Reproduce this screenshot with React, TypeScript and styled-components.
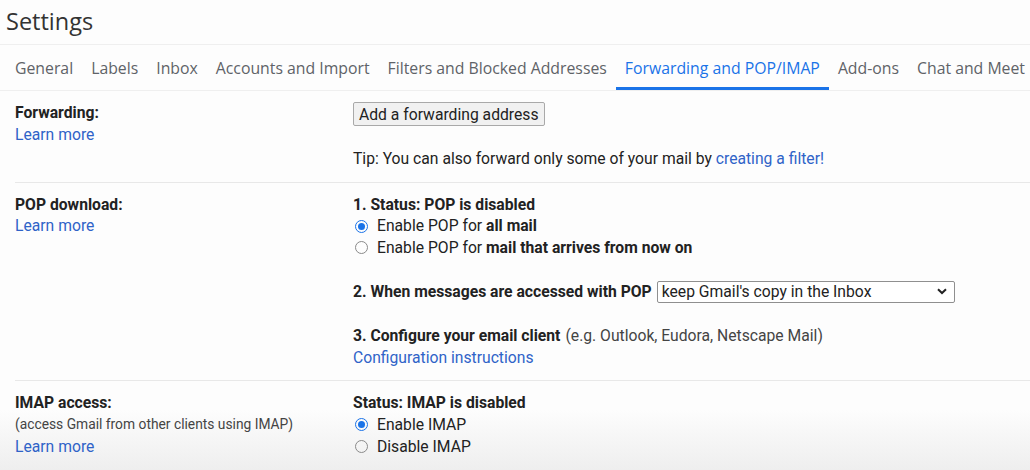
import React, { FC, ReactNode } from 'react';
import styled, { createGlobalStyle } from 'styled-components';

const GlobalStyle = createGlobalStyle`
  html, body {
    margin: 0;
    padding: 0;
    background: #fdfdfd;
  }
  body {
    font-family: Roboto, "Liberation Sans", sans-serif;
    color: #222;
  }
`;

const Page = styled.div`
  box-sizing: border-box;
  height: 470px;
  overflow: hidden;
  background: linear-gradient(
    to bottom,
    #fdfdfd 0,
    #fdfdfd 410px,
    #eeeeee 470px
  );
`;

const Title = styled.h1`
  border-bottom: 1px solid #efefef;
  box-sizing: border-box;
  color: #333;
  font-family: "Open Sans", Roboto, sans-serif;
  font-size: 23.5px;
  font-weight: 400;
  height: 45px;
  line-height: 42px;
  margin: 0;
  padding-left: 6px;
`;

const Tabs = styled.nav`
  border-bottom: 1px solid #efefef;
  box-sizing: border-box;
  display: flex;
  height: 46px;
  padding-left: 6px;
`;

const Tab = styled.a<{ $active?: boolean }>`
  align-items: center;
  border-bottom: 3px solid ${(p) => (p.$active ? '#1a73e8' : 'transparent')};
  box-sizing: border-box;
  color: ${(p) => (p.$active ? '#1a73e8' : '#5f6368')};
  display: flex;
  font-family: "Open Sans", Roboto, sans-serif;
  font-size: 15.8px;
  font-weight: 500;
  height: 45px;
  padding: 3px 9px 0;
  white-space: nowrap;
`;

const Section = styled.section<{ $last?: boolean }>`
  border-bottom: ${(p) => (p.$last ? 'none' : '1px solid #e8e8e8')};
  display: grid;
  grid-template-columns: 338px 1fr;
  margin-left: 15px;
  padding: 11px 0 12px;
`;

const LabelCol = styled.div`
  display: flex;
  flex-direction: column;
`;

const Label = styled.div`
  color: #222;
  font-size: 15.7px;
  font-weight: 700;
  line-height: 21.7px;
`;

const Note = styled.div`
  color: #444;
  font-size: 13.8px;
  line-height: 21.7px;
`;

const Link = styled.a`
  color: #2f63c8;
  font-size: 15.7px;
  line-height: 21.7px;
  text-decoration: none;
`;

const Content = styled.div`
  display: flex;
  flex-direction: column;
  font-size: 15.7px;
  line-height: 21.7px;
`;

const Line = styled.div<{ $gap?: number }>`
  align-items: center;
  display: flex;
  margin-top: ${(p) => p.$gap ?? 0}px;
  white-space: nowrap;
`;

const Strong = styled.b`
  font-weight: 700;
`;

const Muted = styled.span`
  color: #444;
  margin-left: 5px;
`;

const Button = styled.button`
  align-self: flex-start;
  background: #f1f1f1;
  border: 1px solid #a9a9a9;
  border-radius: 2px;
  color: #222;
  font-family: Roboto, "Liberation Sans", sans-serif;
  font-size: 15.7px;
  height: 24px;
  padding: 0 5px;
`;

const Radio = styled.span<{ $checked?: boolean }>`
  border: 1px solid ${(p) => (p.$checked ? '#1a73e8' : '#8a8a8a')};
  border-radius: 50%;
  box-sizing: border-box;
  display: inline-block;
  height: 13px;
  margin: 0 9px 0 2px;
  position: relative;
  width: 13px;

  &::after {
    background: #1a73e8;
    border-radius: 50%;
    content: '';
    display: ${(p) => (p.$checked ? 'block' : 'none')};
    height: 7px;
    left: 2px;
    position: absolute;
    top: 2px;
    width: 7px;
  }
`;

const Select = styled.div`
  align-items: center;
  background: #fff;
  border: 1px solid #8f8f8f;
  border-radius: 2px;
  box-sizing: border-box;
  display: flex;
  height: 22px;
  justify-content: space-between;
  margin-left: 5px;
  padding: 0 7px 0 4px;
  width: 298px;
`;

const Chevron: FC = () => (
  <svg width="10" height="7" viewBox="0 0 10 7">
    <path d="M1 1.2 L5 5 L9 1.2" fill="none" stroke="#222" strokeWidth="2" />
  </svg>
);

const Option: FC<{ checked?: boolean; children: ReactNode }> = ({ checked, children }) => (
  <Line>
    <Radio $checked={checked} />
    <span>{children}</span>
  </Line>
);

const tabs = [
  'General',
  'Labels',
  'Inbox',
  'Accounts and Import',
  'Filters and Blocked Addresses',
  'Forwarding and POP/IMAP',
  'Add-ons',
  'Chat and Meet',
];

const App: FC = () => (
  <Page>
    <GlobalStyle />
    <Title>Settings</Title>
    <Tabs>
      {tabs.map((t) => (
        <Tab key={t} $active={t === 'Forwarding and POP/IMAP'}>
          {t}
        </Tab>
      ))}
    </Tabs>

    <Section>
      <LabelCol>
        <Label>Forwarding:</Label>
        <Link>Learn more</Link>
      </LabelCol>
      <Content>
        <Button>Add a forwarding address</Button>
        <Line $gap={22}>
          Tip: You can also forward only some of your mail by&nbsp;
          <Link>creating a filter!</Link>
        </Line>
      </Content>
    </Section>

    <Section>
      <LabelCol>
        <Label>POP download:</Label>
        <Link>Learn more</Link>
      </LabelCol>
      <Content>
        <Line>
          <Strong>1. Status: POP is disabled</Strong>
        </Line>
        <Option checked>
          Enable POP for <Strong>all mail</Strong>
        </Option>
        <Option>
          Enable POP for <Strong>mail that arrives from now on</Strong>
        </Option>
        <Line $gap={22}>
          <Strong>2. When messages are accessed with POP</Strong>
          <Select>
            <span>keep Gmail's copy in the Inbox</span>
            <Chevron />
          </Select>
        </Line>
        <Line $gap={22}>
          <Strong>3. Configure your email client</Strong>
          <Muted>(e.g. Outlook, Eudora, Netscape Mail)</Muted>
        </Line>
        <Line>
          <Link>Configuration instructions</Link>
        </Line>
      </Content>
    </Section>

    <Section $last>
      <LabelCol>
        <Label>IMAP access:</Label>
        <Note>(access Gmail from other clients using IMAP)</Note>
        <Link>Learn more</Link>
      </LabelCol>
      <Content>
        <Line>
          <Strong>Status: IMAP is disabled</Strong>
        </Line>
        <Option checked>Enable IMAP</Option>
        <Option>Disable IMAP</Option>
      </Content>
    </Section>
  </Page>
);

export default App;
